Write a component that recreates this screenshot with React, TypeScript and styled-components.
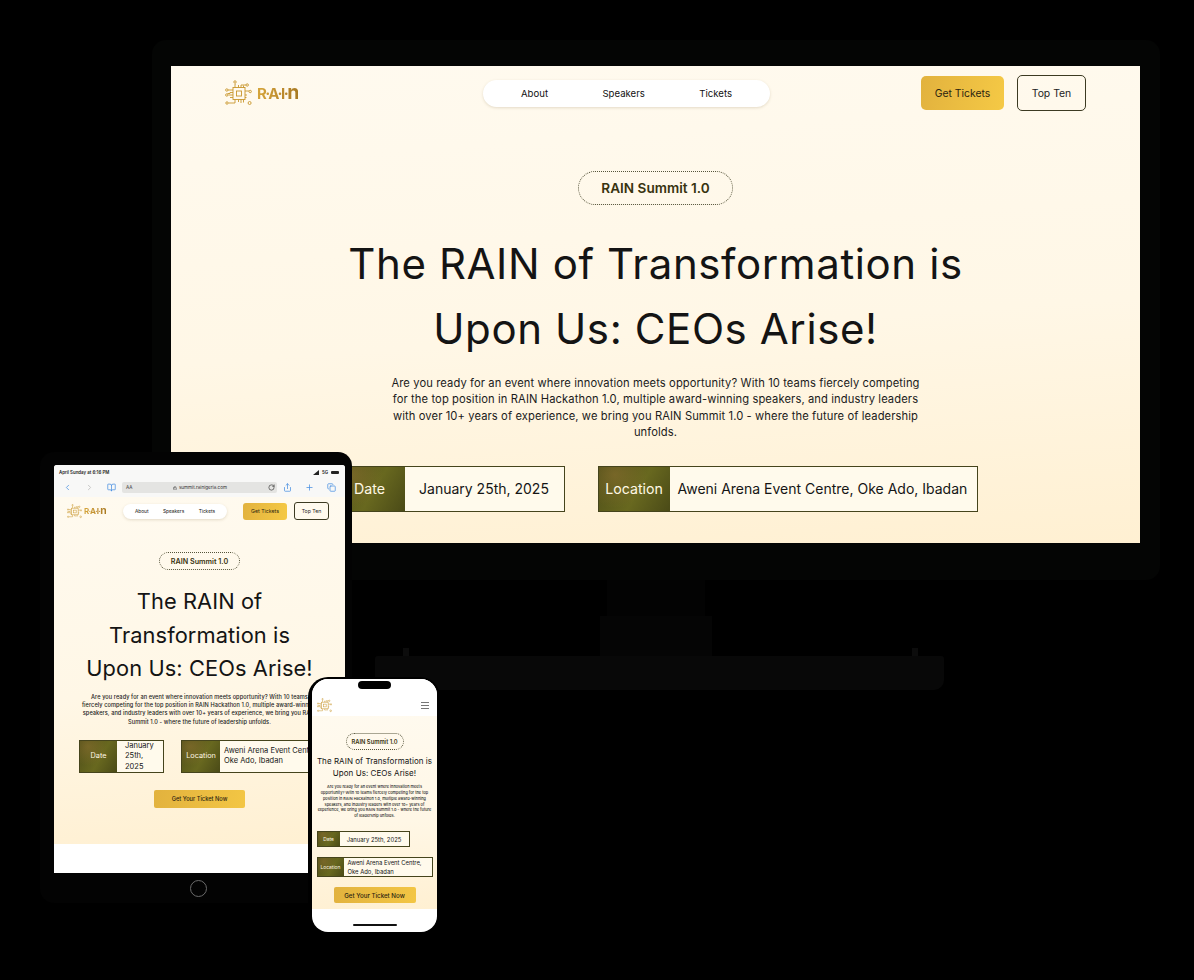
import styled, { createGlobalStyle, ThemeProvider } from 'styled-components';
import {
  BookOpen,
  ChevronLeft,
  ChevronRight,
  Copy,
  Lock,
  Plus,
  RotateCw,
  Share,
} from 'lucide-react';

const GlobalStyle = createGlobalStyle`
  html, body {
    margin: 0;
    background: #000;
  }
  body {
    font-family: Inter, "Noto Sans", sans-serif;
  }
`;

const desktop = {
  navH: '54px', navPad: '0 54px', logoW: '73px', chip: '27px', logoFont: '15px', logoGap: '5px',
  linksW: '287px', linksH: '27px', linkFont: '9.6px', linkPad: '0 38px', linksShift: '34px',
  actionGap: '13px', getW: '83px', getH: '34px', topW: '69px', topH: '36px', actionFont: '10.4px', actionRadius: '5px',
  badgeW: '155px', badgeH: '34px', badgeFont: '13.6px', badgeTop: '51px',
  headFont: '42px', headLh: '65px', headTop: '26px', headSpacing: '0.6px',
  bodyFont: '11.2px', bodyLh: '16.4px', bodyTop: '14px', bodySpacing: '0.1px', bodyWeight: 400,
  infoTop: '25px', infoGap: '33px', infoDir: 'row', infoFont: '14px', labelFont: '14.2px', infoLh: '18px',
  buttonW: '91px', buttonH: '18px', buttonTop: '17px', buttonFont: '5.7px',
};

const tablet = {
  ...desktop,
  navH: '28px', navPad: '0 16px 0 13px', logoW: '38px', chip: '15px', logoFont: '8px', logoGap: '2px',
  linksW: '104px', linksH: '15px', linkFont: '4.8px', linkPad: '0 12px', linksShift: '2px',
  actionGap: '7px', getW: '44px', getH: '17px', topW: '35px', topH: '18px', actionFont: '5.2px', actionRadius: '3px',
  badgeW: '81px', badgeH: '18px', badgeFont: '7.2px', badgeTop: '27px',
  headFont: '21.8px', headLh: '33.6px', headTop: '15px', headSpacing: '0.1px',
  bodyFont: '5.6px', bodyLh: '8.3px', bodyTop: '7px', bodySpacing: '0.08px', bodyWeight: 500,
  infoTop: '14px', infoGap: '17px', infoFont: '7.5px', labelFont: '7.3px', infoLh: '10.5px',
};

const phone = {
  ...tablet,
  badgeW: '58px', badgeH: '17px', badgeFont: '5.8px', badgeTop: '17px',
  headFont: '8px', headLh: '12.4px', headTop: '5px', headSpacing: '0.05px',
  bodyFont: '3.85px', bodyLh: '5.9px', bodyTop: '4px', bodySpacing: '0.03px',
  infoTop: '12px', infoGap: '10px', infoDir: 'column', infoFont: '5.9px', labelFont: '4.9px', infoLh: '9.5px',
  buttonW: '82px', buttonH: '16px', buttonTop: '10px', buttonFont: '6.2px',
};

const Stage = styled.div`
  position: relative;
  width: 1194px;
  height: 980px;
  overflow: hidden;
  background: #000;
`;

const Monitor = styled.div`
  position: absolute;
  left: 152px;
  top: 40px;
  width: 1008px;
  display: flex;
  flex-direction: column;
  align-items: center;
`;

const MonitorFrame = styled.div`
  box-sizing: border-box;
  width: 100%;
  height: 540px;
  padding: 26px 20px 37px 19px;
  border-radius: 14px;
  background: #040504;
`;

const NeckUpper = styled.div`
  width: 98px;
  height: 36px;
  background: #030303;
`;

const NeckLower = styled.div`
  width: 112px;
  height: 40px;
  background: #050505;
`;

const Foot = styled.div`
  position: relative;
  width: 569px;
  height: 34px;
  margin-left: 7px;
  border-radius: 3px 3px 10px 10px;
  background: #080808;

  &::before,
  &::after {
    content: '';
    position: absolute;
    top: -8px;
    width: 6px;
    height: 8px;
    background: #0c0c0c;
  }
  &::before {
    left: 28px;
  }
  &::after {
    right: 26px;
  }
`;

const DesktopScreen = styled.div`
  height: 477px;
  overflow: hidden;
`;

const Tablet = styled.div`
  position: absolute;
  left: 40px;
  top: 452px;
  box-sizing: border-box;
  width: 312px;
  height: 451px;
  padding: 13px 7px 0 14px;
  border-radius: 14px;
  background: #030303;
`;

const TabletScreen = styled.div`
  height: 408px;
  overflow: hidden;
  border-radius: 3px 3px 0 0;
  background: #fff;
`;

const HomeButton = styled.div`
  width: 15px;
  height: 15px;
  margin: 7px 0 0 136px;
  border: 1px solid #6a6a6a;
  border-radius: 50%;
`;

const StatusBar = styled.div`
  height: 15px;
  padding: 0 6px 0 5px;
  display: flex;
  align-items: center;
  justify-content: space-between;
  background: #f8f8f7;
  font-size: 4.4px;
  font-weight: 600;
  color: #222;
`;

const StatusRight = styled.div`
  display: flex;
  align-items: center;
  gap: 3px;
`;

const Signal = styled.svg`
  width: 6px;
  height: 5px;
  fill: #222;
`;

const Battery = styled.span`
  display: block;
  width: 8px;
  height: 3.5px;
  border-radius: 1px;
  background: #222;
`;

const Toolbar = styled.div`
  box-sizing: border-box;
  height: 17px;
  padding: 0 9px 2px;
  display: flex;
  align-items: center;
  gap: 13px;
  background: #f8f8f7;
  color: #4a90e2;
`;

const AddressBar = styled.div`
  flex: 1;
  height: 11px;
  padding: 0 2px 0 4px;
  margin: 0 -7px;
  display: flex;
  align-items: center;
  justify-content: space-between;
  border-radius: 2px;
  background: #e4e4e2;
  font-size: 4.6px;
  color: #333;
`;

const Address = styled.span`
  display: flex;
  align-items: center;
  gap: 1.5px;
`;

const Page = styled.div<{ $minH: number }>`
  min-height: ${(p) => p.$minH}px;
  display: flex;
  flex-direction: column;
  align-items: center;
  background: linear-gradient(176deg, #fffaef 0%, #fff7e6 55%, #fff0d2 100%);
`;

const Nav = styled.div`
  box-sizing: border-box;
  width: 100%;
  height: ${(p) => p.theme.navH};
  padding: ${(p) => p.theme.navPad};
  display: flex;
  align-items: center;
  justify-content: space-between;
`;

const LogoWrap = styled.div`
  width: ${(p) => p.theme.logoW};
  display: flex;
  align-items: center;
  gap: ${(p) => p.theme.logoGap};
  flex-shrink: 0;
`;

const ChipSvg = styled.svg`
  width: ${(p) => p.theme.chip};
  height: ${(p) => p.theme.chip};
  flex-shrink: 0;
  fill: none;
  stroke: #c8962c;
  stroke-width: 0.9;
`;

const LogoText = styled.span`
  font-size: ${(p) => p.theme.logoFont};
  font-weight: 700;
  letter-spacing: -0.1em;
  white-space: nowrap;
  background: linear-gradient(90deg, #d6a63c, #b9862a 70%, #a87a22);
  -webkit-background-clip: text;
  background-clip: text;
  color: transparent;
`;

const LogoArch = styled.span`
  font-size: 1.3em;
  line-height: 0;
`;

const Links = styled.div`
  box-sizing: border-box;
  width: ${(p) => p.theme.linksW};
  height: ${(p) => p.theme.linksH};
  margin-left: ${(p) => p.theme.linksShift};
  padding: ${(p) => p.theme.linkPad};
  display: flex;
  align-items: center;
  justify-content: space-between;
  border-radius: 14px;
  background: #fff;
  box-shadow: 0 1px 3px rgba(120, 100, 50, 0.2);
  font-size: ${(p) => p.theme.linkFont};
  color: #111;
`;

const Actions = styled.div`
  display: flex;
  align-items: center;
  gap: ${(p) => p.theme.actionGap};
`;

const GetTickets = styled.div`
  width: ${(p) => p.theme.getW};
  height: ${(p) => p.theme.getH};
  display: flex;
  align-items: center;
  justify-content: center;
  border-radius: ${(p) => p.theme.actionRadius};
  background: linear-gradient(100deg, #e2b23e, #f5c945);
  font-size: ${(p) => p.theme.actionFont};
  color: #2b2410;
`;

const TopTen = styled.div`
  box-sizing: border-box;
  width: ${(p) => p.theme.topW};
  height: ${(p) => p.theme.topH};
  display: flex;
  align-items: center;
  justify-content: center;
  border: 1px solid #3c3a22;
  border-radius: ${(p) => p.theme.actionRadius};
  font-size: ${(p) => p.theme.actionFont};
  color: #222;
`;

const PhoneNav = styled.div`
  box-sizing: border-box;
  height: 37px;
  padding: 16px 8px 0 5px;
  display: flex;
  align-items: center;
  justify-content: space-between;
  background: #fff;
`;

const PhoneChip = styled.div`
  width: 15px;
  height: 15px;
  display: flex;
`;

const Hamburger = styled.div`
  width: 8px;
  height: 5px;
  border-top: 1px solid #777;
  border-bottom: 1px solid #777;
  position: relative;

  &::after {
    content: '';
    position: absolute;
    left: 0;
    right: 0;
    top: 2px;
    height: 1px;
    background: #777;
  }
`;

const Badge = styled.div`
  box-sizing: border-box;
  width: ${(p) => p.theme.badgeW};
  height: ${(p) => p.theme.badgeH};
  margin-top: ${(p) => p.theme.badgeTop};
  display: flex;
  align-items: center;
  justify-content: center;
  border: 1px dotted #55543a;
  border-radius: 20px;
  font-size: ${(p) => p.theme.badgeFont};
  font-weight: 600;
  color: #38330f;
`;

const Headline = styled.h1`
  margin: ${(p) => p.theme.headTop} 0 0;
  font-size: ${(p) => p.theme.headFont};
  line-height: ${(p) => p.theme.headLh};
  letter-spacing: ${(p) => p.theme.headSpacing};
  font-weight: 400;
  text-align: center;
  white-space: nowrap;
  color: #141414;
`;

const Body = styled.p`
  margin: ${(p) => p.theme.bodyTop} 0 0;
  font-size: ${(p) => p.theme.bodyFont};
  line-height: ${(p) => p.theme.bodyLh};
  letter-spacing: ${(p) => p.theme.bodySpacing};
  font-weight: ${(p) => p.theme.bodyWeight};
  text-align: center;
  white-space: nowrap;
  color: #1b1b1b;
`;

const Line = styled.span`
  display: block;
`;

const InfoRow = styled.div`
  margin-top: ${(p) => p.theme.infoTop};
  display: flex;
  flex-direction: ${(p) => p.theme.infoDir};
  align-items: flex-start;
  gap: ${(p) => p.theme.infoGap};
`;

const InfoBox = styled.div<{ $w: number; $h: number }>`
  box-sizing: border-box;
  width: ${(p) => p.$w}px;
  height: ${(p) => p.$h}px;
  display: flex;
  border: 1px solid #45441c;
  background: #fffaec;
  font-size: ${(p) => p.theme.infoFont};
  line-height: ${(p) => p.theme.infoLh};
`;

const InfoLabel = styled.div<{ $w: number }>`
  width: ${(p) => p.$w}px;
  flex-shrink: 0;
  display: flex;
  align-items: center;
  justify-content: center;
  background:
    radial-gradient(circle at 22% 18%, rgba(140, 112, 48, 0.6), transparent 50%),
    linear-gradient(120deg, #4e4e18, #68681f 55%, #4a4a17);
  font-size: ${(p) => p.theme.labelFont};
  color: #fff8e4;
`;

const InfoValue = styled.div<{ $center?: boolean; $pad: number }>`
  flex: 1;
  padding: 0 ${(p) => p.$pad}px;
  display: flex;
  align-items: center;
  justify-content: ${(p) => (p.$center ? 'center' : 'flex-start')};
  white-space: pre;
  color: #151515;
`;

const TicketButton = styled.div`
  width: ${(p) => p.theme.buttonW};
  height: ${(p) => p.theme.buttonH};
  margin-top: ${(p) => p.theme.buttonTop};
  display: flex;
  align-items: center;
  justify-content: center;
  border-radius: 2px;
  background: linear-gradient(100deg, #e2b23e, #f3c644);
  font-size: ${(p) => p.theme.buttonFont};
  font-weight: 500;
  color: #2b2410;
`;

const Phone = styled.div`
  position: absolute;
  left: 308px;
  top: 677px;
  box-sizing: border-box;
  width: 132px;
  height: 258px;
  padding: 2px 3px 3px 4px;
  border-radius: 20px;
  background: #000;
`;

const PhoneScreen = styled.div`
  position: relative;
  height: 253px;
  overflow: hidden;
  border-radius: 16px;
  background: #fff;
`;

const Notch = styled.div`
  position: absolute;
  left: 46px;
  top: 2px;
  width: 33px;
  height: 8px;
  border-radius: 5px;
  background: #000;
`;

const HomeBar = styled.div`
  position: absolute;
  left: 41px;
  bottom: 6px;
  width: 44px;
  height: 2.5px;
  border-radius: 2px;
  background: #111;
`;

const Chip = () => (
  <ChipSvg viewBox="0 0 27 27">
    <rect x="8" y="7.5" width="12" height="12" />
    <rect x="11.5" y="11" width="5" height="5" />
    <path d="M10 7.5V4H10.5M13.5 7.5V5M16 7.5V5H21M18.5 7.5V5.5" />
    <path d="M10 19.5V23H3.5M13.5 19.5V22M16 19.5V23M18.5 19.5V22.5" />
    <path d="M8 10H3M8 12.5H5V13.5H2.5M8 15H3.5M8 17.5H5" />
    <path d="M20 11H24M20 15H22M20 17.5H21.5" />
    <circle cx="10" cy="2" r="1.2" />
    <circle cx="22.2" cy="5" r="1.2" />
    <circle cx="25.2" cy="11.5" r="1.2" />
    <circle cx="2" cy="23" r="1.2" />
    <circle cx="1.8" cy="15" r="1.2" />
    <circle cx="1.8" cy="10" r="1.2" />
    <circle cx="24.6" cy="23" r="1.5" />
  </ChipSvg>
);

const Logo = () => (
  <LogoWrap>
    <Chip />
    <LogoText>
      R·A·I·<LogoArch>n</LogoArch>
    </LogoText>
  </LogoWrap>
);

const SiteNav = () => (
  <Nav>
    <Logo />
    <Links>
      <span>About</span>
      <span>Speakers</span>
      <span>Tickets</span>
    </Links>
    <Actions>
      <GetTickets>Get Tickets</GetTickets>
      <TopTen>Top Ten</TopTen>
    </Actions>
  </Nav>
);

type InfoData = { w: number; h: number; label: number; pad: number; value: string; center?: boolean };

type HeroProps = {
  heading: string[];
  body: string[];
  date: InfoData;
  place: InfoData;
  button?: boolean;
};

const Hero = ({ heading, body, date, place, button }: HeroProps) => (
  <>
    <Badge>RAIN Summit 1.0</Badge>
    <Headline>
      {heading.map((l) => (
        <Line key={l}>{l}</Line>
      ))}
    </Headline>
    <Body>
      {body.map((l) => (
        <Line key={l}>{l}</Line>
      ))}
    </Body>
    <InfoRow>
      <InfoBox $w={date.w} $h={date.h}>
        <InfoLabel $w={date.label}>Date</InfoLabel>
        <InfoValue $center={date.center} $pad={date.pad}>{date.value}</InfoValue>
      </InfoBox>
      <InfoBox $w={place.w} $h={place.h}>
        <InfoLabel $w={place.label}>Location</InfoLabel>
        <InfoValue $pad={place.pad}>{place.value}</InfoValue>
      </InfoBox>
    </InfoRow>
    {button && <TicketButton>Get Your Ticket Now</TicketButton>}
  </>
);

const App = () => (
  <Stage>
    <GlobalStyle />

    <Monitor>
      <MonitorFrame>
        <DesktopScreen>
          <ThemeProvider theme={desktop}>
            <Page $minH={477}>
              <SiteNav />
              <Hero
                heading={['The RAIN of Transformation is', 'Upon Us: CEOs Arise!']}
                body={[
                  'Are you ready for an event where innovation meets opportunity? With 10 teams fiercely competing',
                  'for the top position in RAIN Hackathon 1.0, multiple award-winning speakers, and industry leaders',
                  'with over 10+ years of experience, we bring you RAIN Summit 1.0 - where the future of leadership',
                  'unfolds.',
                ]}
                date={{ w: 231, h: 46, label: 70, pad: 8, value: 'January 25th, 2025', center: true }}
                place={{ w: 380, h: 46, label: 71, pad: 8, value: 'Aweni Arena Event Centre, Oke Ado, Ibadan' }}
              />
            </Page>
          </ThemeProvider>
        </DesktopScreen>
      </MonitorFrame>
      <NeckUpper />
      <NeckLower />
      <Foot />
    </Monitor>

    <Tablet>
      <TabletScreen>
        <StatusBar>
          <span>April Sunday at 6:16 PM</span>
          <StatusRight>
            <Signal viewBox="0 0 6 5">
              <path d="M0 5 6 0V5Z" />
            </Signal>
            <span>5G</span>
            <Battery />
          </StatusRight>
        </StatusBar>
        <Toolbar>
          <ChevronLeft size={9} />
          <ChevronRight size={9} color="#b8b8b8" />
          <BookOpen size={9} />
          <AddressBar>
            <span>AA</span>
            <Address>
              <Lock size={4} color="#222" />
              summit.rainigeria.com
            </Address>
            <RotateCw size={7} color="#222" />
          </AddressBar>
          <Share size={9} />
          <Plus size={9} />
          <Copy size={9} />
        </Toolbar>
        <ThemeProvider theme={tablet}>
          <Page $minH={347}>
            <SiteNav />
            <Hero
              heading={['The RAIN of', 'Transformation is', 'Upon Us: CEOs Arise!']}
              body={[
                'Are you ready for an event where innovation meets opportunity? With 10 teams',
                'fiercely competing for the top position in RAIN Hackathon 1.0, multiple award-winning',
                'speakers, and industry leaders with over 10+ years of experience, we bring you RAIN',
                'Summit 1.0 - where the future of leadership unfolds.',
              ]}
              date={{ w: 85, h: 33, label: 37, pad: 8, value: 'January\n25th,\n2025' }}
              place={{ w: 139, h: 33, label: 38, pad: 4, value: 'Aweni Arena Event Centre,\nOke Ado, Ibadan' }}
              button
            />
          </Page>
        </ThemeProvider>
      </TabletScreen>
      <HomeButton />
    </Tablet>

    <Phone>
      <PhoneScreen>
        <ThemeProvider theme={phone}>
          <PhoneNav>
            <PhoneChip>
              <Chip />
            </PhoneChip>
            <Hamburger />
          </PhoneNav>
          <Page $minH={193}>
            <Hero
              heading={['The RAIN of Transformation is', 'Upon Us: CEOs Arise!']}
              body={[
                'Are you ready for an event where innovation meets',
                'opportunity? With 10 teams fiercely competing for the top',
                'position in RAIN Hackathon 1.0, multiple award-winning',
                'speakers, and industry leaders with over 10+ years of',
                'experience, we bring you RAIN Summit 1.0 - where the future',
                'of leadership unfolds.',
              ]}
              date={{ w: 93, h: 16, label: 22, pad: 4, value: 'January 25th, 2025', center: true }}
              place={{ w: 116, h: 20, label: 26, pad: 4, value: 'Aweni Arena Event Centre,\nOke Ado, Ibadan' }}
              button
            />
          </Page>
        </ThemeProvider>
        <Notch />
        <HomeBar />
      </PhoneScreen>
    </Phone>
  </Stage>
);

export default App;
